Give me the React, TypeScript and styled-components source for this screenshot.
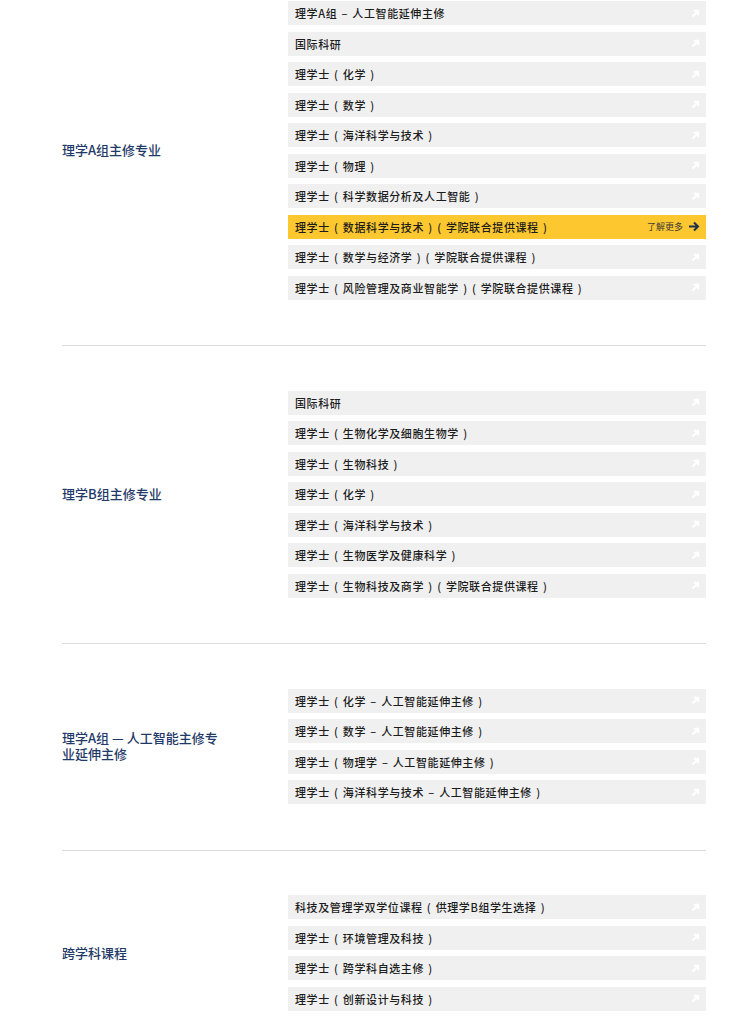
import React from 'react';
import styled, { createGlobalStyle } from 'styled-components';

const GlobalStyle = createGlobalStyle`
  body {
    margin: 0;
    background: #ffffff;
    font-family: "Noto Sans CJK SC", "Noto Sans", sans-serif;
  }
`;

type Group = { title: string; items: string[]; active?: number };

const groups: Group[] = [
  {
    title: '理学A组主修专业',
    active: 7,
    items: [
      '理学A组 – 人工智能延伸主修',
      '国际科研',
      '理学士 ( 化学 )',
      '理学士 ( 数学 )',
      '理学士 ( 海洋科学与技术 )',
      '理学士 ( 物理 )',
      '理学士 ( 科学数据分析及人工智能 )',
      '理学士 ( 数据科学与技术 ) ( 学院联合提供课程 )',
      '理学士 ( 数学与经济学 ) ( 学院联合提供课程 )',
      '理学士 ( 风险管理及商业智能学 ) ( 学院联合提供课程 )',
    ],
  },
  {
    title: '理学B组主修专业',
    items: [
      '国际科研',
      '理学士 ( 生物化学及细胞生物学 )',
      '理学士 ( 生物科技 )',
      '理学士 ( 化学 )',
      '理学士 ( 海洋科学与技术 )',
      '理学士 ( 生物医学及健康科学 )',
      '理学士 ( 生物科技及商学 ) ( 学院联合提供课程 )',
    ],
  },
  {
    title: '理学A组 — 人工智能主修专业延伸主修',
    items: [
      '理学士 ( 化学 – 人工智能延伸主修 )',
      '理学士 ( 数学 – 人工智能延伸主修 )',
      '理学士 ( 物理学 – 人工智能延伸主修 )',
      '理学士 ( 海洋科学与技术 – 人工智能延伸主修 )',
    ],
  },
  {
    title: '跨学科课程',
    items: [
      '科技及管理学双学位课程 ( 供理学B组学生选择 )',
      '理学士 ( 环境管理及科技 )',
      '理学士 ( 跨学科自选主修 )',
      '理学士 ( 创新设计与科技 )',
    ],
  },
];

function App() {
  return (
    <Page>
      <GlobalStyle />
      {groups.map((g, gi) => (
        <Section key={gi} $first={gi === 0} $last={gi === groups.length - 1}>
          <Title>{g.title}</Title>
          <List>
            {g.items.map((item, i) => (
              <Row key={i} $active={g.active === i}>
                <RowText>{item}</RowText>
                {g.active === i ? (
                  <More>
                    <MoreText>了解更多</MoreText>
                    <svg width="12" height="11" viewBox="0 0 12 11">
                      <path d="M1 5.5h9M6 1.5l4 4-4 4" fill="none" stroke="#1e2f52" strokeWidth="2" />
                    </svg>
                  </More>
                ) : (
                  <svg width="9" height="9" viewBox="0 0 9 9">
                    <path d="M1.5 7.5L7 2M2.8 1.8h4.4v4.4" fill="none" stroke="#ffffff" strokeWidth="2" />
                  </svg>
                )}
              </Row>
            ))}
          </List>
        </Section>
      ))}
    </Page>
  );
}

const Page = styled.div`
  padding: 0 23px 0 62px;
`;

const Section = styled.section<{ $first: boolean; $last: boolean }>`
  display: grid;
  grid-template-columns: 226px 1fr;
  align-items: center;
  padding: ${(p) => (p.$first ? '1px' : '44.5px')} 0 ${(p) => (p.$last ? '20px' : '45.5px')};
  border-bottom: ${(p) => (p.$last ? 'none' : '1px solid #dcdcdc')};
`;

const Title = styled.div`
  width: 165px;
  font-size: 13px;
  font-weight: 500;
  line-height: 16px;
  color: #1f3a68;
`;

const List = styled.div`
  display: flex;
  flex-direction: column;
  gap: 6.5px;
`;

const Row = styled.div<{ $active: boolean }>`
  height: 24px;
  display: flex;
  align-items: center;
  justify-content: space-between;
  padding: 0 6px 0 7px;
  background: ${(p) => (p.$active ? '#fdc82f' : '#f0f0f0')};
`;

const RowText = styled.span`
  font-size: 11px;
  font-weight: 500;
  letter-spacing: 0.6px;
  word-spacing: 1.2px;
  white-space: pre;
  color: #1c1c1c;
`;

const More = styled.span`
  display: flex;
  align-items: center;
  gap: 5px;
`;

const MoreText = styled.span`
  font-size: 9px;
  color: #3a3a3a;
`;

export default App;
